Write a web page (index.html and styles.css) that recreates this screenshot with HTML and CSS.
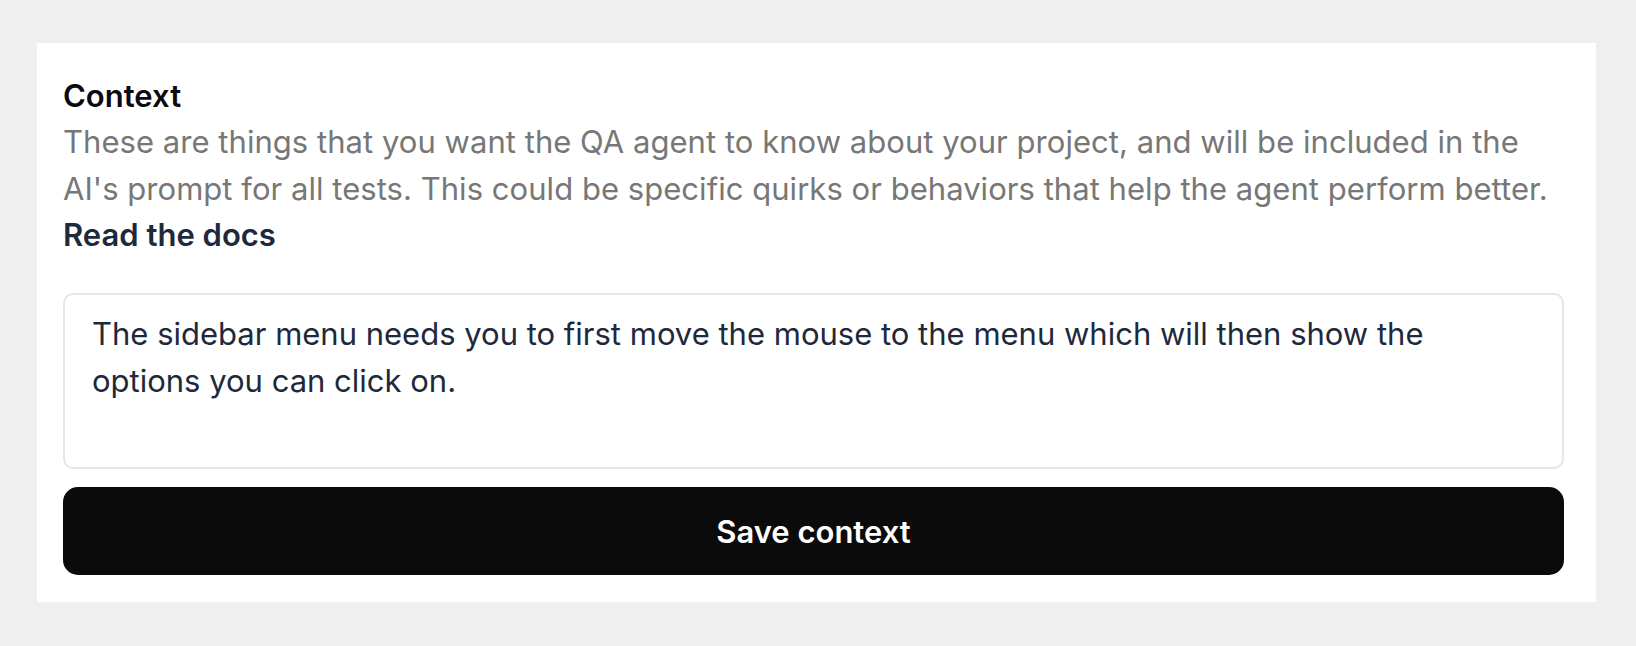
FILE: index.html
```html
<!DOCTYPE html>
<html lang="en">
<head>
<meta charset="utf-8">
<title>Context</title>
<link rel="stylesheet" href="styles.css">
</head>
<body>
<main class="page">
  <section class="card">
    <h2 class="title">Context</h2>
    <p class="desc">These are things that you want the QA agent to know about your project, and will be included in the AI's prompt for all tests. This could be specific quirks or behaviors that help the agent perform better.</p>
    <a class="docs" href="#">Read the docs</a>
    <textarea class="field" rows="3">The sidebar menu needs you to first move the mouse to the menu which will then show the options you can click on.</textarea>
    <button class="save" type="button">Save context</button>
  </section>
</main>
</body>
</html>
```

FILE: styles.css
```css
* { box-sizing: border-box; }
html, body { margin: 0; padding: 0; }
body {
  background: #efefef;
  font-family: Inter, "Noto Sans", "Liberation Sans", sans-serif;
}
.page {
  padding: 43px 40px 44px 37px;
}
.card {
  background: #ffffff;
  width: 1559px;
  padding: 30px 32px 27px 26px;
  display: flex;
  flex-direction: column;
}
.title {
  margin: 0;
  font-size: 31px;
  line-height: 46px;
  font-weight: 600;
  color: #0a0a10;
}
.desc {
  margin: 0;
  font-size: 31px;
  line-height: 46.7px;
  font-weight: 400;
  letter-spacing: 0.04px;
  color: #777777;
}
.docs {
  display: block;
  font-size: 31px;
  line-height: 46.7px;
  font-weight: 600;
  color: #1e293b;
  text-decoration: none;
}
.field {
  display: block;
  margin-top: 34px;
  width: 100%;
  height: 176px;
  border: 2px solid #e6e6e6;
  border-radius: 10px;
  padding: 16px 27px;
  font-family: inherit;
  font-size: 31px;
  line-height: 46.7px;
  color: #1e293b;
  background: #ffffff;
  resize: none;
  outline: none;
  overflow: hidden;
}
.save {
  margin-top: 18px;
  width: 100%;
  height: 88px;
  border: 0;
  border-radius: 15px;
  background: #0b0b0b;
  color: #ffffff;
  font-family: inherit;
  font-size: 31px;
  font-weight: 600;
  cursor: pointer;
}
```
